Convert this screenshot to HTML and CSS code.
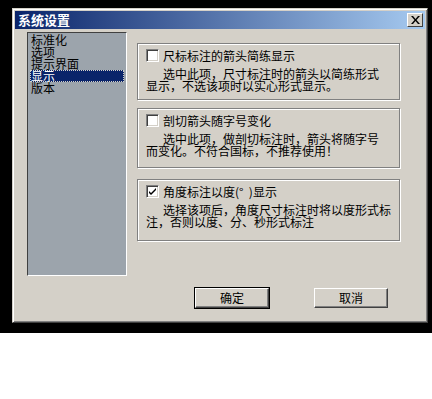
FILE: index.html
```html
<!DOCTYPE html>
<html lang="zh-CN">
<head>
    <meta charset="UTF-8">
    <title>系统设置</title>
    <link rel="stylesheet" href="styles.css">
</head>
<body>
    <div class="screen">
        <div class="dialog">
            <div class="titlebar">
                <span class="title">系统设置</span>
                <span class="close">
                    <svg width="9" height="8" viewBox="0 0 9 8"><path d="M0 0h2l2.5 3 2.5-3h2l-3.5 4 3.5 4h-2l-2.5-3-2.5 3h-2l3.5-4z" fill="#000"/></svg>
                </span>
            </div>

            <div class="content">
                <ul class="nav">
                    <li>标准化</li>
                    <li>选项</li>
                    <li>提示界面</li>
                    <li class="active">显示</li>
                    <li>版本</li>
                </ul>

                <div class="options">
                    <div class="group g1">
                        <label class="check"><span class="box"></span>尺标标注的箭头简练显示</label>
                        <p class="desc"><span class="indent">选中此项，尺寸标注时的箭头以简练形式</span><br>显示，不选该项时以实心形式显示。</p>
                    </div>
                    <div class="group g2">
                        <label class="check"><span class="box"></span>剖切箭头随字号变化</label>
                        <p class="desc"><span class="indent">选中此项，做剖切标注时，箭头将随字号</span><br>而变化。不符合国标，不推荐使用！</p>
                    </div>
                    <div class="group g3">
                        <label class="check"><span class="box checked"><svg width="9" height="9" viewBox="0 0 9 9"><path d="M1 4l2 2 5-5v2l-5 5-2-2z" fill="#000"/></svg></span>角度标注以度(°&nbsp;&nbsp;)显示</label>
                        <p class="desc"><span class="indent">选择该项后，角度尺寸标注时将以度形式标</span><br>注，否则以度、分、秒形式标注</p>
                    </div>
                </div>
            </div>

            <div class="buttons">
                <button class="btn default">确定</button>
                <button class="btn">取消</button>
            </div>
        </div>
    </div>
</body>
</html>
```

FILE: styles.css
```css
body {
    margin: 0;
    background: #fff;
    font-family: "Noto Sans CJK SC", "Liberation Sans", sans-serif;
    font-size: 12px;
    color: #000;
}

.screen {
    background: #000;
    height: 333px;
    padding-top: 8px;
    padding-left: 12px;
    box-sizing: border-box;
}

.dialog {
    width: 416px;
    height: 315px;
    box-sizing: border-box;
    background: #d4d0c8;
    border-top: 1px solid #d4d0c8;
    border-left: 1px solid #d4d0c8;
    border-right: 1px solid #404040;
    border-bottom: 1px solid #404040;
    box-shadow: inset 1px 1px 0 #fff, inset -1px -1px 0 #808080;
    padding: 2px;
    display: flex;
    flex-direction: column;
}

.titlebar {
    height: 18px;
    background: linear-gradient(to right, #0a246a, #a6caf0);
    display: flex;
    align-items: center;
    justify-content: space-between;
    padding: 0 2px 0 3px;
}

.title {
    color: #fff;
    font-weight: bold;
    font-size: 13px;
    line-height: 18px;
}

.close {
    width: 16px;
    height: 14px;
    box-sizing: border-box;
    background: #d4d0c8;
    border-top: 1px solid #fff;
    border-left: 1px solid #fff;
    border-right: 1px solid #404040;
    border-bottom: 1px solid #404040;
    display: flex;
    align-items: center;
    justify-content: center;
}

.content {
    display: flex;
    padding: 3px 0 0 12px;
}

.nav {
    list-style: none;
    margin: 0;
    padding: 1px 2px;
    width: 100px;
    height: 244px;
    box-sizing: border-box;
    background: #9ca4ac;
    border-top: 1px solid #404040;
    border-left: 1px solid #404040;
    border-right: 1px solid #fff;
    border-bottom: 1px solid #fff;
}

.nav li {
    line-height: 12px;
    font-size: 12px;
    height: 12px;
    padding-left: 1px;
}

.nav .active {
    background: #0a246a;
    color: #fff;
    outline: 1px dotted #d4d0c8;
    outline-offset: -1px;
}

.options {
    margin-left: 10px;
    padding-top: 11px;
}

.group {
    width: 263px;
    box-sizing: border-box;
    border: 1px solid #808080;
    box-shadow: 1px 1px 0 #fff, inset 1px 1px 0 #fff;
    padding: 5px 8px 0 8px;
}

.g1 { height: 57px; }
.g2 { height: 60px; margin-top: 8px; }
.g3 { height: 62px; margin-top: 11px; }

.check {
    display: flex;
    align-items: center;
    height: 13px;
    line-height: 13px;
}

.box {
    width: 13px;
    height: 13px;
    box-sizing: border-box;
    background: #fff;
    border-top: 1px solid #808080;
    border-left: 1px solid #808080;
    border-right: 1px solid #fff;
    border-bottom: 1px solid #fff;
    box-shadow: inset 1px 1px 0 #404040, inset -1px -1px 0 #d4d0c8;
    margin-right: 4px;
    display: flex;
    align-items: center;
    justify-content: center;
}

.desc {
    margin: 6px 0 0 0;
    line-height: 12px;
}

.indent {
    padding-left: 17px;
}

.buttons {
    display: flex;
    padding: 0 0 0 180px;
    margin-top: auto;
    margin-bottom: 12px;
    gap: 45px;
}

.btn {
    width: 74px;
    height: 20px;
    font-family: "Noto Sans CJK SC", sans-serif;
    font-size: 12px;
    line-height: 16px;
    padding: 0;
    background: #d4d0c8;
    border-top: 1px solid #fff;
    border-left: 1px solid #fff;
    border-right: 1px solid #404040;
    border-bottom: 1px solid #404040;
    box-shadow: inset -1px -1px 0 #808080;
    color: #000;
}

.btn.default {
    outline: 1px solid #000;
}
```
